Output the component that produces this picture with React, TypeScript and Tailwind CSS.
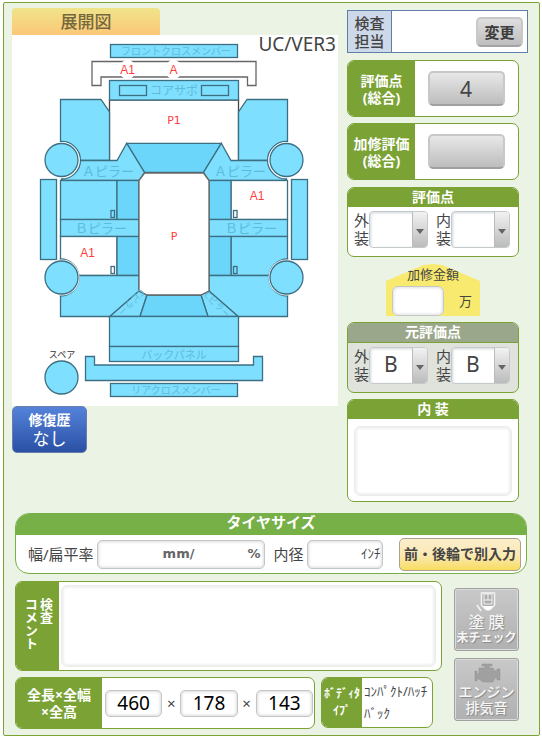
import type { ReactNode } from "react";

const LIGHT = "#7fdfff";
const DARK = "#6bd5fa";

function Mirror({ children }: { children: ReactNode }) {
  return <g transform="translate(348 0) scale(-1 1)">{children}</g>;
}

/* One side of the unfolded body: fenders, pillars, doors, sill and wheels. */
function BodySide({ frontDoor, rearDoor }: { frontDoor: string; rearDoor: string }) {
  return (
    <>
      <path d="M60.5 99.5H101L109.5 112V160.5H80.5A19 19 0 0 0 60.5 141.5Z" fill={LIGHT} />
      <path d="M80.5 160.5H117L126.7 143.3L144.5 172.5L139 180.5H61.5V179A19 19 0 0 0 80.5 160.5Z" fill={LIGHT} />
      <rect x="60.5" y="180.5" width="56.5" height="39" fill={frontDoor} />
      <rect x="117" y="180.5" width="22" height="39" fill={DARK} />
      <rect x="60.5" y="219.5" width="78.5" height="17" fill={LIGHT} />
      <rect x="60.5" y="236.5" width="56.5" height="39" fill={rearDoor} />
      <rect x="117" y="236.5" width="22" height="39" fill={DARK} />
      <path d="M80 275.5H139V291L109.8 316.5H60.5V277.5Z" fill={LIGHT} />
      <path d="M139 291L147 295L140 316.5H109.8Z" fill={LIGHT} />
      <rect x="40.5" y="179.5" width="16" height="80" fill={LIGHT} />
      <rect x="111" y="210.5" width="3.5" height="7" fill="none" />
      <rect x="111" y="266.5" width="3.5" height="7" fill="none" />
      <path d="M60.5 259A18.5 18.5 0 0 1 60.5 296Z" fill="#fff" />
      <circle cx="61.5" cy="160" r="18" fill="#fff" stroke="none" />
      <circle cx="61.5" cy="277.5" r="18" fill="#fff" stroke="none" />
      <circle cx="61.5" cy="160" r="16.5" fill={LIGHT} />
      <circle cx="61.5" cy="277.5" r="16.5" fill={LIGHT} />
    </>
  );
}

function CarDiagram() {
  return (
    <svg
      viewBox="12 35 326 371"
      className="block w-full bg-white font-['Noto_Sans_CJK_JP',sans-serif]"
      role="img"
      aria-label="展開図"
    >
      <g stroke="#3d6f82" strokeWidth="1.3">
        <rect x="110.5" y="44.5" width="127" height="13" fill={LIGHT} />
        <path d="M92 61.5H256V85.5H247.5V77H101V85.5H92Z" fill="#fff" stroke="#666" />
        <g fill="#fff" stroke="none">
          <ellipse cx="127.5" cy="69.5" rx="8" ry="10" />
          <ellipse cx="173.5" cy="69.5" rx="8" ry="10" />
        </g>
        <rect x="109.5" y="100" width="129" height="72" fill="#fff" stroke="#444" />
        <rect x="109.5" y="80.5" width="129" height="19.5" fill={LIGHT} />
        <rect x="119.5" y="85.5" width="27" height="10" fill="none" />
        <rect x="201.5" y="85.5" width="27" height="10" fill="none" />
        <path d="M126.7 143.3H221.3L203.5 172.5H144.5Z" fill={DARK} />
        <BodySide frontDoor={LIGHT} rearDoor="#fff" />
        <Mirror>
          <BodySide frontDoor="#fff" rearDoor={LIGHT} />
        </Mirror>
        <path d="M147 295H201L208 316.5H140Z" fill={DARK} />
        <path
          d="M144.5 173H203.5L209 180.5V291L201 295H147L139 291V180.5Z"
          fill="#fff"
          stroke="#666"
        />
        <rect x="109.5" y="316.5" width="129" height="30" fill={LIGHT} />
        <rect x="109.5" y="346.5" width="129" height="15" fill={LIGHT} />
        <path d="M85.5 356.5H94.5V365H253.5V356.5H262.5V380.5H85.5Z" fill={LIGHT} />
        <rect x="110.5" y="383.5" width="127" height="13" fill={LIGHT} />
        <circle cx="61.5" cy="377.5" r="16.5" fill={LIGHT} />
      </g>
      <g fill="#5dbcd9" textAnchor="middle">
        <text x="176" y="55" fontSize="10">フロントクロスメンバー</text>
        <text x="174" y="95" fontSize="12">コアサポ</text>
        <text x="108" y="176" fontSize="13">Ａピラー</text>
        <text x="240" y="176" fontSize="13">Ａピラー</text>
        <text x="101" y="233" fontSize="13">Ｂピラー</text>
        <text x="251" y="233" fontSize="13">Ｂピラー</text>
        <text x="174" y="359" fontSize="11">バックパネル</text>
        <text x="176" y="394" fontSize="10">リアクロスメンバー</text>
        <text transform="translate(129 300) rotate(135)" fontSize="9">Cピラー</text>
        <text transform="translate(215 307) rotate(45)" fontSize="9">Cピラー</text>
      </g>
      <text x="62" y="358" fontSize="9" fill="#333" textAnchor="middle">スペア</text>
      <g fill="#ff3b3b" textAnchor="middle" fontSize="12" className="font-['Liberation_Sans',Arial,sans-serif]">
        <text x="127.5" y="73.5">A1</text>
        <text x="173.5" y="73.5">A</text>
        <text x="257" y="199.5">A1</text>
        <text x="87.5" y="256.5">A1</text>
      </g>
      <g fill="#ff3b3b" textAnchor="middle" fontSize="11" className="font-['DejaVu_Sans',sans-serif]">
        <text x="174" y="124">P1</text>
        <text x="174" y="240">P</text>
      </g>
      <text x="336" y="51" fontSize="19" fill="#444" textAnchor="end" className="font-['Noto_Sans',sans-serif]">
        UC/VER3
      </text>
    </svg>
  );
}

function GradeSelect({ label, name, value }: { label: string; name: string; value: string }) {
  return (
    <div className="flex">
      <label htmlFor={name} className="w-[15px] text-[15px] leading-[18px] break-all text-[#444]">
        {label}
      </label>
      <div className="relative h-[37px] w-[59px] overflow-hidden rounded-[4px] border border-[#c4c9cc] bg-white">
        <select
          id={name}
          defaultValue={value}
          className="block h-full w-full appearance-none bg-transparent pb-1 pl-[14px] text-[21px] leading-[30px] text-[#444] shadow-[inset_1px_1px_3px_#cfd6da]"
        >
          <option value=""></option>
          <option value="A">A</option>
          <option value="B">B</option>
          <option value="C">C</option>
        </select>
        <span className="pointer-events-none absolute inset-y-0 right-0 flex w-[15px] items-center justify-center border-l border-[#bbb] bg-linear-to-b from-[#f2f2f2] to-[#bcbcbc]">
          <svg viewBox="0 0 8 5" className="mt-1 h-[5px] w-2" aria-hidden="true">
            <path d="M0 0H8L4 5Z" fill="#666" />
          </svg>
        </span>
      </div>
    </div>
  );
}

function GradeCard({ title, id, value, muted }: { title: string; id: string; value: string; muted?: boolean }) {
  return (
    <section className={`overflow-hidden rounded-[7px] border border-[#7aa234] ${muted ? "bg-[#dfe3dc]" : "bg-white"}`}>
      <h2
        className={`text-center text-[14px] leading-[17px] font-bold text-white ${
          muted ? "h-5 border-b border-[#7aa234] bg-[#9ba78a]" : "h-[19px] bg-[#7aa234]"
        }`}
      >
        {title}
      </h2>
      <div className="flex justify-between pt-1 pr-2 pb-2 pl-[6px]">
        <GradeSelect label="外装" name={`${id}-exterior`} value={value} />
        <GradeSelect label="内装" name={`${id}-interior`} value={value} />
      </div>
    </section>
  );
}

function ScoreCard({ title, value }: { title: string; value: string }) {
  return (
    <section className="flex h-[57px] overflow-hidden rounded-[7px] border border-[#7aa234] bg-white">
      <h2 className="flex w-[67px] flex-col justify-center bg-[#7aa234] text-center text-[14px] leading-[17px] font-bold text-white">
        <span>{title}</span>
        <span>(総合)</span>
      </h2>
      <div className="flex flex-1 items-center justify-center pr-[1px]">
        <button
          type="button"
          aria-label={`${title} ${value}`}
          className="h-[35px] w-[77px] rounded-[5px] border-2 border-[#c8c8c8] border-b-[#a0a0a0] bg-linear-to-b from-[#e8e8e8] to-[#bdbdbd] text-[21px] leading-[30px] text-[#444]"
        >
          {value}
        </button>
      </div>
    </section>
  );
}

const sizeBox =
  "h-[27px] min-w-0 flex-1 rounded-[5px] border border-[#c6c6c6] bg-white text-center text-[19px] text-black shadow-[inset_0_0_3px_1px_#dcdcdc]";

const greyTile =
  "flex h-[63px] w-[65px] flex-col items-center overflow-hidden rounded-[3px] border border-[#a0a0a0] bg-linear-to-b from-[#c9c9c9] to-[#b0b0b0] leading-4 font-medium whitespace-nowrap text-[#f6f6f6] [text-shadow:1px_1px_1px_#888] shadow-[inset_0_0_0_1px_#dadada]";

export default function App() {
  return (
    <main className="mt-[2px] mr-[2px] ml-[3px] rounded-[2px] border border-[#7aa234] bg-[#eaf3e4] pt-[5px] pb-[6px] font-['Noto_Sans','Noto_Sans_CJK_JP',sans-serif] text-[#444]">
      <div className="flex gap-[9px] pr-[11px] pl-2">
        <div className="min-w-0 flex-1">
          <h1 className="h-[27px] w-[148px] rounded-t-[4px] bg-linear-to-b from-[#efe48a] to-[#fbc777] text-center text-[17px] leading-[28px] font-medium text-[#75683c]">
            展開図
          </h1>
          <CarDiagram />
          <button
            type="button"
            className="flex h-[47px] w-[75px] flex-col items-center justify-center rounded-[5px] border border-[#6b7da8] bg-linear-to-b from-[#5583da] to-[#2a50a5] text-white"
          >
            <span className="text-[14px] leading-[18px] font-bold">修復歴</span>
            <span className="text-[17px] leading-5">なし</span>
          </button>
        </div>

        <div className="mt-[2px] w-[181px] shrink-0">
          <div className="flex h-[43px] border border-[#5f7ea8] bg-white">
            <div className="flex w-[44px] flex-col justify-center border-r border-[#5f7ea8] bg-[#cdd8e8] text-center text-[15px] leading-[18px] font-medium">
              <span>検査</span>
              <span>担当</span>
            </div>
            <div className="flex flex-1 items-center justify-end pr-1">
              <button
                type="button"
                className="h-[30px] w-[47px] rounded-[5px] border-2 border-[#c8c8c8] border-b-[#a4a4a4] bg-linear-to-b from-[#dedede] to-[#bebebe] text-[15px] leading-[24px] font-bold text-[#3c3c3c]"
              >
                変更
              </button>
            </div>
          </div>

          <div className="mt-[7px] mr-[9px] flex flex-col gap-[6px]">
            <ScoreCard title="評価点" value="4" />
            <ScoreCard title="加修評価" value="" />
            <div className="mt-[1px]">
              <GradeCard title="評価点" id="grade" value="" />
            </div>
            <div className="mx-auto h-[53px] w-[94px] bg-[#f8e96f] pt-[2px] [clip-path:polygon(0_18px,40%_2px,50%_1px,60%_2px,100%_18px,100%_100%,0_100%)]">
              <label htmlFor="amount" className="block text-center text-[13px] leading-[18px]">
                加修金額
              </label>
              <div className="mt-[3px] flex items-center gap-[15px] pl-[6px]">
                <input
                  id="amount"
                  className="h-[30px] w-[52px] rounded-[6px] border border-[#c6c6c6] bg-white px-1 text-right shadow-[inset_0_0_3px_1px_#e0e0e0]"
                />
                <span className="text-[13px] leading-5">万</span>
              </div>
            </div>
            <GradeCard title="元評価点" id="base-grade" value="B" muted />
            <section className="overflow-hidden rounded-[7px] border border-[#7aa234] bg-white">
              <h2 className="h-[19px] bg-[#7aa234] text-center text-[14px] leading-[18px] font-bold text-white">
                <label htmlFor="interior-note">内 装</label>
              </h2>
              <div className="px-[6px] pt-[7px] pb-[5px]">
                <textarea
                  id="interior-note"
                  className="block h-[70px] w-full resize-none rounded-[6px] border border-[#ececec] bg-white p-1 text-[13px] shadow-[inset_0_0_2px_2px_#f0f0f0]"
                />
              </div>
            </section>
          </div>
        </div>
      </div>

      <section className="mt-[11px] mr-3 ml-[11px] overflow-hidden rounded-[14px] border border-[#76b047] bg-white">
        <h2 className="h-[21px] bg-[#76b047] text-center text-[15px] leading-4 font-bold text-white">タイヤサイズ</h2>
        <div className="flex h-[38px] items-center pr-[5px] pl-3 text-[15px]">
          <label htmlFor="tire-width" className="leading-[22px]">
            幅/扁平率
          </label>
          <div className="ml-[3px] flex h-[29px] w-[168px] items-center rounded-[5px] border border-[#c6c6c6] pr-[3px] font-['DejaVu_Sans',sans-serif] text-[13px] font-bold text-[#666] shadow-[inset_0_0_3px_1px_#dcdcdc]">
            <input id="tire-width" className="h-5 w-[65px] bg-transparent text-right" />
            <span>mm/</span>
            <input aria-label="扁平率" className="h-5 w-0 min-w-0 flex-1 bg-transparent text-right" />
            <span>%</span>
          </div>
          <label htmlFor="tire-inner" className="ml-[9px] leading-[22px]">
            内径
          </label>
          <div className="ml-[3px] flex h-[29px] w-[76px] items-center rounded-[5px] border border-[#c6c6c6] pr-[1px] text-[13px] shadow-[inset_0_0_3px_1px_#dcdcdc]">
            <input id="tire-inner" className="h-5 w-0 min-w-0 flex-1 bg-transparent text-right" />
            <span>ｲﾝﾁ</span>
          </div>
          <button
            type="button"
            className="ml-auto h-[33px] w-[122px] rounded-[5px] border border-[#aaa191] bg-linear-to-b from-[#fbeecb] via-[#fbe9b4] to-[#f8dc5c] text-[14px] leading-[30px] font-bold whitespace-nowrap text-[#444]"
          >
            前・後輪で別入力
          </button>
        </div>
      </section>

      <div className="mt-[7px] mr-5 ml-[11px] flex gap-3">
        <div className="min-w-0 flex-1">
          <section className="flex h-[90px] overflow-hidden rounded-[7px] border border-[#7aa234] bg-white">
            <label
              htmlFor="comment"
              className="w-[43px] bg-[#7aa234] pt-4 pr-[6px] text-[13px] leading-[15px] font-bold text-white [writing-mode:vertical-rl]"
            >
              検査
              <br />
              コメント
            </label>
            <div className="flex-1 py-[3px] pr-[5px] pl-[2px]">
              <textarea
                id="comment"
                className="block h-full w-full resize-none rounded-[6px] border border-[#ececec] bg-white p-1 text-[13px] shadow-[inset_0_0_2px_2px_#f0f0f0]"
              />
            </div>
          </section>

          <div className="mt-[6px] mr-[9px] flex gap-[6px]">
            <section className="flex h-[52px] min-w-0 flex-1 overflow-hidden rounded-[7px] border border-[#7aa234] bg-white">
              <h2 className="flex w-[86px] flex-col justify-center bg-[#7aa234] text-center text-[14px] leading-[17px] font-bold text-white">
                <span>全長×全幅</span>
                <span>×全高</span>
              </h2>
              <div className="flex min-w-0 flex-1 items-center pr-[1px] pl-[3px] text-[15px]">
                <input aria-label="全長" defaultValue="460" className={sizeBox} />
                <span className="w-[18px] text-center">×</span>
                <input aria-label="全幅" defaultValue="178" className={sizeBox} />
                <span className="w-[18px] text-center">×</span>
                <input aria-label="全高" defaultValue="143" className={sizeBox} />
              </div>
            </section>
            <section className="flex h-[51px] w-[112px] overflow-hidden rounded-[7px] border border-[#7aa234] bg-white">
              <h2 className="flex w-[40px] flex-col items-center bg-[#7aa234] pt-[7px] text-[12px] leading-[17px] font-bold whitespace-nowrap text-white">
                <span>ﾎﾞﾃﾞｨﾀ</span>
                <span>ｲﾌﾟ</span>
              </h2>
              <p className="pt-[2px] pl-[2px] text-[13px] leading-[22px] whitespace-nowrap">
                ｺﾝﾊﾟｸﾄ/ﾊｯﾁ
                <br />
                ﾊﾞｯｸ
              </p>
            </section>
          </div>
        </div>

        <div className="mt-[7px] flex shrink-0 flex-col gap-[7px]">
          <button type="button" className={greyTile}>
            <svg viewBox="0 0 24 23" className="mt-[2px] h-[23px] w-6 shrink-0" aria-hidden="true">
              <path d="M6.500 2V14L10.500 18H15.500L19.500 14V2Z" fill="#adadad" stroke="#f4f4f4" strokeWidth="1.500" />
              <path d="M9 3H17V13H9ZM9 9H17M13 3V9" fill="none" stroke="#f4f4f4" />
              <path d="M8 15H18L14.500 19.500H11.500Z" fill="#fff" />
              <path d="M2 14L6 20" stroke="#f4f4f4" strokeWidth="1.500" />
            </svg>
            <span className="text-[16px]">塗 膜</span>
            <span className="text-[12px] font-bold">未チェック</span>
          </button>
          <button type="button" className={greyTile}>
            <svg viewBox="0 0 28 23" className="mt-[2px] h-[23px] w-7 shrink-0" aria-hidden="true">
              <path
                d="M9 3H19V5H16V7H20L22 10H24V8H27V19H24V17H22L20 21H10L6 18H4V20H2V10H4V13H6V7H12V5H9Z"
                fill="#a0a0a0"
                stroke="#929292"
                strokeWidth=".5"
              />
            </svg>
            <span className="text-[14px]">エンジン</span>
            <span className="text-[14px]">排気音</span>
          </button>
        </div>
      </div>
    </main>
  );
}
